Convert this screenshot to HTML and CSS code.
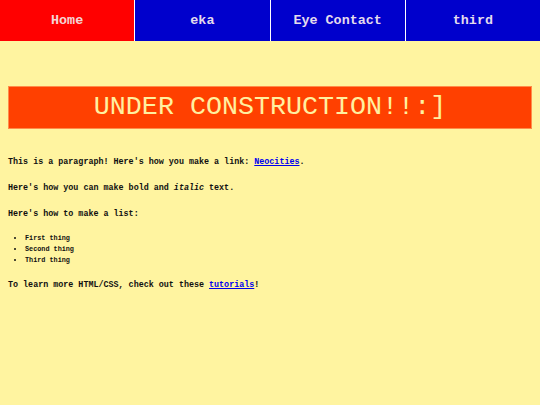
FILE: index.html
```html
<!DOCTYPE html>
<html>
<head>
<meta charset="utf-8">
<link rel="stylesheet" href="styles.css">
</head>
<body>
<nav class="nav">
  <a class="nav-item home" href="#">Home</a>
  <a class="nav-item" href="#">eka</a>
  <a class="nav-item" href="#">Eye Contact</a>
  <a class="nav-item" href="#">third</a>
</nav>
<main class="content">
  <h1 class="banner">UNDER CONSTRUCTION!!:]</h1>
  <p class="para first">This is a paragraph! Here's how you make a link: <a href="#">Neocities</a>.</p>
  <p class="para">Here's how you can make bold and <em>italic</em> text.</p>
  <p class="para">Here's how to make a list:</p>
  <ul class="list">
    <li>First thing</li>
    <li>Second thing</li>
    <li>Third thing</li>
  </ul>
  <p class="para">To learn more HTML/CSS, check out these <a href="#">tutorials</a>!</p>
</main>
</body>
</html>
```

FILE: styles.css
```css
html, body {
  margin: 0;
  padding: 0;
  background: #fff4a0;
}
body {
  font-family: "Courier New", "Nimbus Mono PS", "Nimbus Mono L", "FreeMono", Courier, "Liberation Mono", monospace;
  color: #111;
}
.nav {
  display: flex;
  gap: 1px;
  background: #ffffff;
  height: 41px;
}
.nav-item {
  flex: 1;
  display: flex;
  align-items: center;
  justify-content: center;
  background: #0000cc;
  color: #e4dcec;
  text-decoration: none;
  font-size: 13.4px;
  font-weight: bold;
}
.nav-item.home {
  background: #ff0000;
  color: #f4d4d4;
}
.content {
  padding: 0 8px;
}
.banner {
  margin: 45px 0 0;
  height: 41px;
  background: #ff4000;
  border: 1px solid #ff8c4a;
  color: #fff0a0;
  font-size: 26.7px;
  font-weight: normal;
  line-height: 41px;
  text-align: center;
}
.para {
  margin: 16px 0 0;
  font-size: 8.4px;
  line-height: 10px;
  font-weight: bold;
}
.para.first {
  margin-top: 28px;
}
.para a {
  color: #0000ee;
}
.list {
  margin: 14px 0 0;
  padding-left: 17px;
  font-size: 6.8px;
  line-height: 11px;
  font-weight: bold;
  list-style: disc;
}
.list + .para {
  margin-top: 14px;
}
```
